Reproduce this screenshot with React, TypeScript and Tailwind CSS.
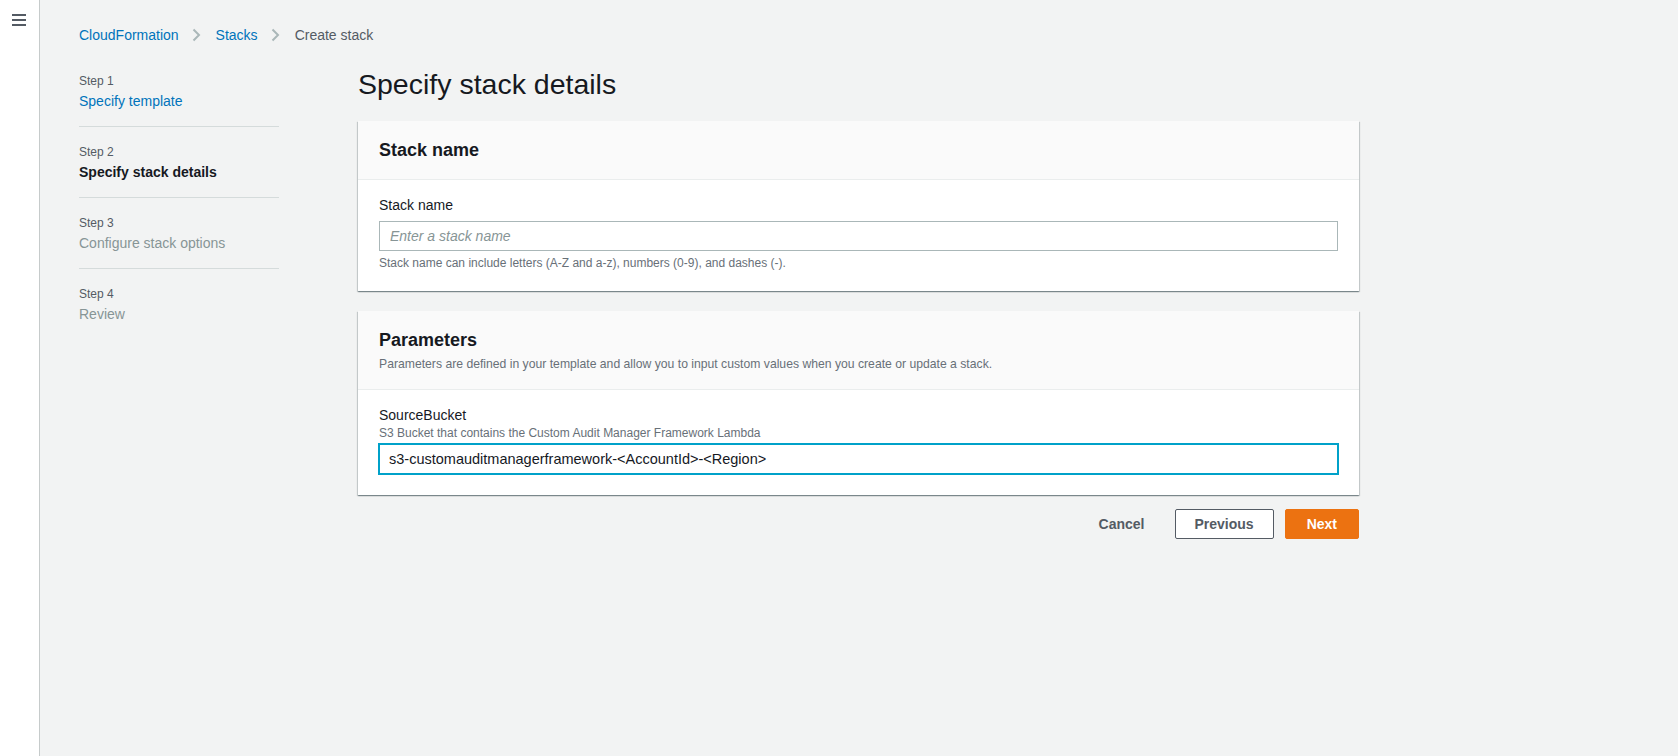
import React from "react";

const steps = [
  { label: "Step 1", name: "Specify template", state: "done" },
  { label: "Step 2", name: "Specify stack details", state: "active" },
  { label: "Step 3", name: "Configure stack options", state: "todo" },
  { label: "Step 4", name: "Review", state: "todo" },
];

const cardShadow =
  "shadow-[0_1px_1px_0_rgba(0,28,36,0.3),1px_1px_1px_0_rgba(0,28,36,0.15),-1px_1px_1px_0_rgba(0,28,36,0.15)]";

function Chevron() {
  return (
    <svg width="16" height="16" viewBox="0 0 16 16" className="shrink-0">
      <path d="M4.5 2.5 L10 8 L4.5 13.5" fill="none" stroke="#aab7b8" strokeWidth="2" />
    </svg>
  );
}

export default function App() {
  return (
    <div
      className="flex h-[756px] w-full bg-[#f2f3f3] text-[#16191f]"
      style={{ fontFamily: '"Liberation Sans", Arial, sans-serif' }}
    >
      {/* collapsed side nav */}
      <aside className="w-[40px] shrink-0 bg-white border-r border-[#c6cbcb] pl-[12px] pt-[14px]">
        <svg width="14" height="12" viewBox="0 0 14 12">
          <rect x="0" y="0" width="14" height="2" fill="#545b64" />
          <rect x="0" y="5" width="14" height="2" fill="#545b64" />
          <rect x="0" y="10" width="14" height="2" fill="#545b64" />
        </svg>
      </aside>

      <main className="flex-1 pl-[39px] pt-[25px]">
        <nav className="flex items-center gap-[10.5px] text-[14px] leading-[20px]">
          <a className="text-[#0073bb]">CloudFormation</a>
          <Chevron />
          <a className="text-[#0073bb]">Stacks</a>
          <Chevron />
          <span className="text-[#545b64]">Create stack</span>
        </nav>

        <div className="flex mt-[21px]">
          <ol className="w-[200px] shrink-0 pt-[7px]">
            {steps.map((s, i) => (
              <li
                key={s.label}
                className={`${i > 0 ? "pt-[17px]" : ""} ${i < steps.length - 1 ? "pb-[15px] border-b border-[#d5dbdb]" : ""}`}
              >
                <div className="text-[12px] leading-[16px] text-[#545b64]">{s.label}</div>
                <div
                  className={`mt-[2px] text-[14px] leading-[20px] ${
                    s.state === "done"
                      ? "text-[#0073bb]"
                      : s.state === "active"
                      ? "font-bold text-[#16191f]"
                      : "text-[#879596]"
                  }`}
                >
                  {s.name}
                </div>
              </li>
            ))}
          </ol>

          <section className="ml-[79px] w-[1001px]">
            <h1 className="text-[28.5px] leading-[36px] font-normal">Specify stack details</h1>

            <div className={`mt-[19px] bg-white ${cardShadow}`}>
              <div className="bg-[#fafafa] border-b border-[#eaeded] px-[21px] py-[17px]">
                <h2 className="text-[18px] leading-[24px] font-bold">Stack name</h2>
              </div>
              <div className="px-[21px] pt-[15px] pb-[20px]">
                <label className="block text-[14px] leading-[20px]">Stack name</label>
                <input
                  className="mt-[6px] block w-full h-[30px] border border-[#aab7b8] bg-white px-[10px] text-[14px] italic placeholder:text-[#879596] outline-none"
                  placeholder="Enter a stack name"
                />
                <p className="mt-[4px] text-[12px] leading-[16px] text-[#687078]">
                  Stack name can include letters (A-Z and a-z), numbers (0-9), and dashes (-).
                </p>
              </div>
            </div>

            <div className={`mt-[20px] bg-white ${cardShadow}`}>
              <div className="bg-[#fafafa] border-b border-[#eaeded] px-[21px] py-[17px]">
                <h2 className="text-[18px] leading-[24px] font-bold">Parameters</h2>
                <p className="mt-[4px] text-[12.2px] leading-[16px] text-[#687078]">
                  Parameters are defined in your template and allow you to input custom values when you create or update a stack.
                </p>
              </div>
              <div className="px-[21px] pt-[15px] pb-[21px]">
                <label className="block text-[14px] leading-[20px]">SourceBucket</label>
                <p className="text-[12px] leading-[16px] text-[#687078]">
                  S3 Bucket that contains the Custom Audit Manager Framework Lambda
                </p>
                <input
                  className="mt-[3px] block w-full h-[30px] border border-[#00a1c9] shadow-[0_0_0_1px_#00a1c9] bg-white px-[9px] text-[14.5px] text-[#16191f] outline-none"
                  defaultValue="s3-customauditmanagerframework-<AccountId>-<Region>"
                />
              </div>
            </div>

            <div className="mt-[14px] flex justify-end gap-[11px] text-[14px] font-bold">
              <button className="h-[30px] pl-[20px] pr-[18px] border border-transparent text-[#545b64]">Cancel</button>
              <button className="h-[30px] px-[19px] border border-[#545b64] rounded-[2px] bg-white text-[#545b64]">
                Previous
              </button>
              <button className="h-[30px] px-[21px] border border-[#ec7211] rounded-[2px] bg-[#ec7211] text-white">
                Next
              </button>
            </div>
          </section>
        </div>
      </main>
    </div>
  );
}
